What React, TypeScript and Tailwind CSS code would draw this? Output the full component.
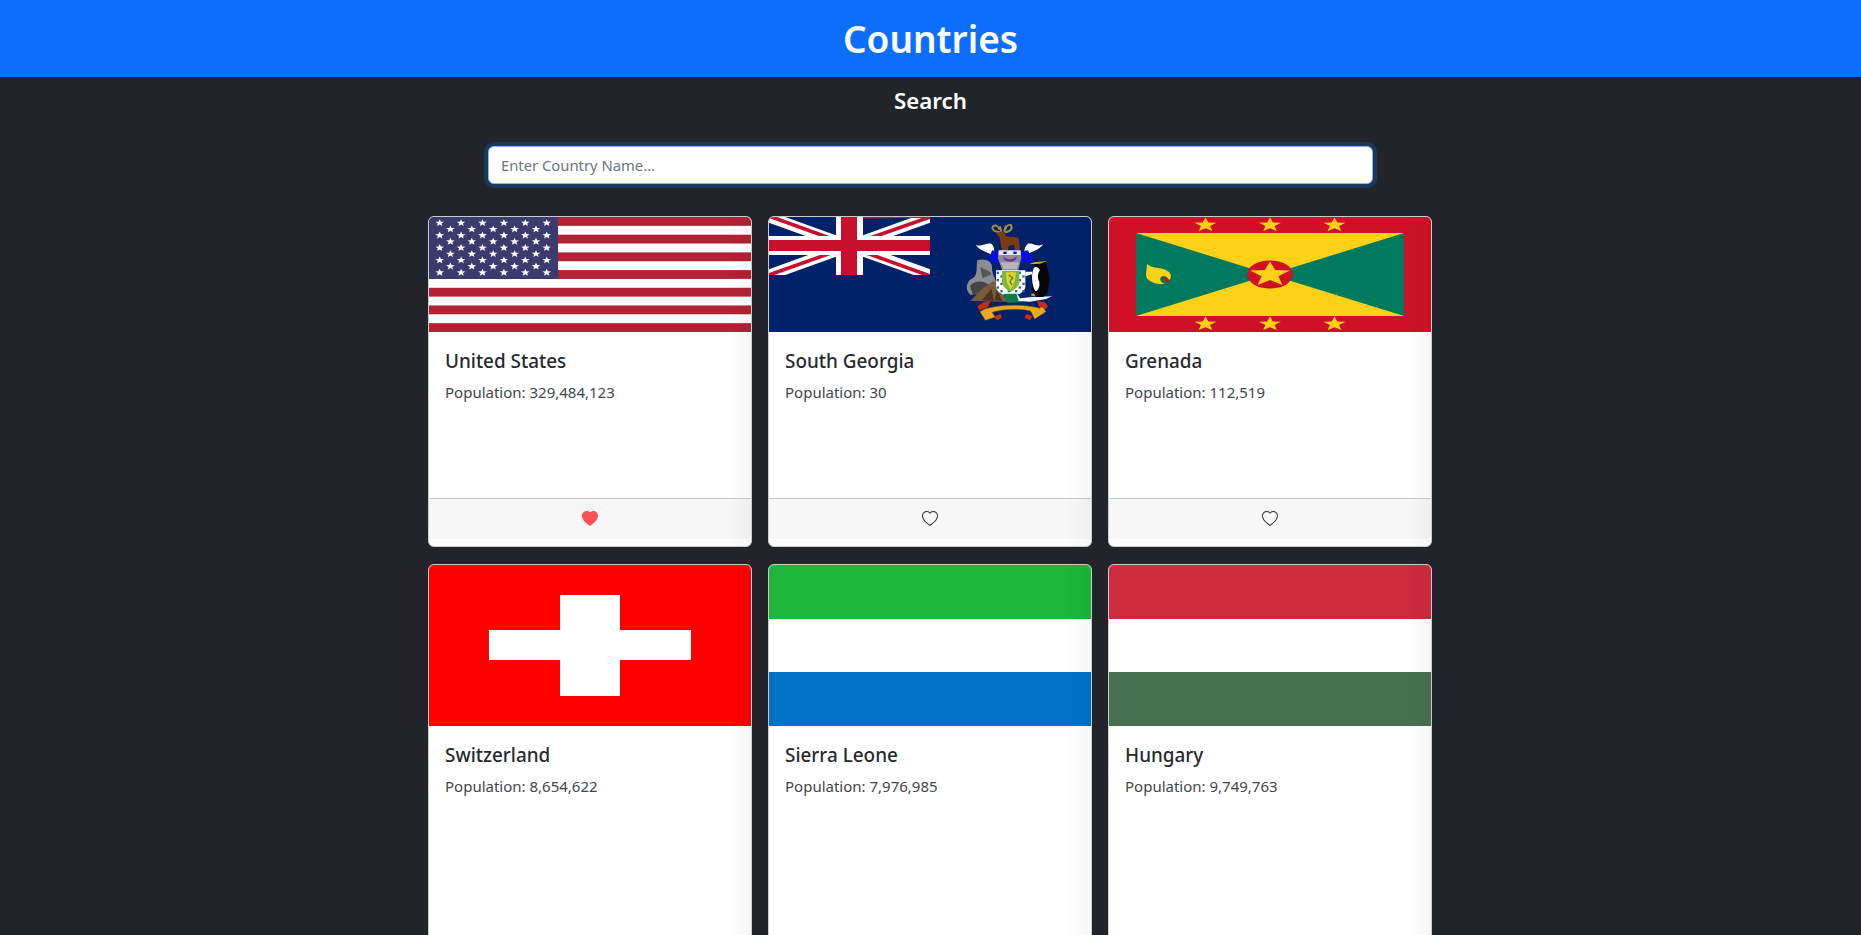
import { BsHeart, BsHeartFill } from 'react-icons/bs';
import type { ReactNode } from 'react';

// points for a 5 pointed star, rx/ry differ because the flags are stretched
function starPoints(cx: number, cy: number, rx: number, ry: number) {
  const pts: string[] = [];
  for (let i = 0; i < 10; i++) {
    const r = i % 2 === 0 ? 1 : 0.42;
    const a = -Math.PI / 2 + (i * Math.PI) / 5;
    pts.push(`${(cx + Math.cos(a) * rx * r).toFixed(2)},${(cy + Math.sin(a) * ry * r).toFixed(2)}`);
  }
  return pts.join(' ');
}

function FlagSvg({ w, h, children }: { w: number; h: number; children: ReactNode }) {
  return (
    <svg viewBox={`0 0 ${w} ${h}`} preserveAspectRatio="none" className="block w-full h-full">
      {children}
    </svg>
  );
}

function UsFlag() {
  const stripe = 115 / 13;
  const stars: [number, number][] = [];
  for (let row = 0; row < 9; row++) {
    const odd = row % 2 === 1;
    const count = odd ? 5 : 6;
    for (let c = 0; c < count; c++) {
      stars.push([10.7 + (odd ? 10.7 : 0) + c * 21.4, 6 + row * 6.2]);
    }
  }
  return (
    <FlagSvg w={322} h={115}>
      <rect width="322" height="115" fill="#fff" />
      {[0, 2, 4, 6, 8, 10, 12].map((i) => (
        <rect key={i} y={i * stripe} width="322" height={stripe} fill="#b22234" />
      ))}
      <rect width="129" height="62" fill="#3c3b6e" />
      {stars.map(([x, y], i) => (
        <polygon key={i} points={starPoints(x, y, 4.6, 3.8)} fill="#fff" />
      ))}
    </FlagSvg>
  );
}

function CoatOfArms() {
  const checks: [number, number][] = [];
  for (let y = 170; y < 232; y += 11) {
    for (let x = 110; x < 196; x += 11) {
      if ((x < 128 || x > 172 || y > 222) && (x + y) % 2 === 0) checks.push([x, y]);
    }
  }
  return (
    <g transform="translate(191 -2) scale(0.3333)">
      {/* antlers */}
      <path d="M120 52 C98 50 92 38 102 32 C110 30 116 36 118 44 M120 34 L124 50 M134 52 C152 50 160 40 152 30 C144 28 138 36 136 44 M138 32 L132 50" fill="none" stroke="#a48b45" strokeWidth="6" />
      {/* stag */}
      <path d="M106 53 L132 50 L138 64 L176 68 L180 106 L164 106 L162 90 L146 92 L144 106 L126 106 L122 84 L118 66 Z" fill="#7d3a12" />
      {/* wings */}
      <path d="M47 90 C66 96 80 82 94 86 C106 98 104 116 98 122 C84 110 62 110 47 90 Z" fill="#fff" />
      <path d="M250 88 C232 98 216 82 204 86 C190 98 192 114 198 120 C214 110 234 108 250 88 Z" fill="#fff" />
      {/* mantling */}
      <path d="M96 106 L120 110 L138 132 L124 150 L104 140 L84 142 Z" fill="#0a10dc" />
      <path d="M204 106 L180 110 L162 132 L176 150 L196 140 L222 144 Z" fill="#0a10dc" />
      {/* helm */}
      <path d="M116 108 L182 108 L184 128 L174 170 L128 170 L114 130 Z" fill="#8b8d90" />
      <path d="M116 106 L182 106 L182 120 L116 120 Z" fill="#e8e8ee" />
      <path d="M130 124 C142 136 158 136 170 124 L168 134 C156 142 144 142 132 134 Z" fill="#7c2fa0" />
      <rect x="130" y="110" width="10" height="7" fill="#0a10dc" />
      <rect x="160" y="110" width="10" height="7" fill="#0a10dc" />
      <path d="M122 142 L178 142 L170 162 L130 162 Z" fill="#b4b6b9" />
      {/* seal */}
      <path d="M52 136 C76 128 98 140 96 158 C94 176 112 196 112 226 L32 240 C14 226 18 198 38 190 C54 182 48 156 52 136 Z" fill="#8b8d90" />
      <path d="M30 212 C50 192 82 196 102 228 L38 238 Z" fill="#434445" />
      <path d="M60 156 C72 164 90 164 94 178 L68 190 Z" fill="#55575a" />
      {/* tussock */}
      <path d="M30 258 L70 218 L100 198 L120 212 L146 260 Z" fill="#7a5a3c" />
      <path d="M66 256 L94 220 L102 258 Z M104 256 L110 224 L128 258 Z" fill="#4e3420" />
      {/* shield */}
      <path d="M108 166 L196 166 L196 216 C192 236 170 240 152 246 C132 240 110 234 108 216 Z" fill="#fff" />
      {checks.map(([x, y], i) => (
        <rect key={i} x={x} y={y} width="7" height="7" fill="#2a62ad" />
      ))}
      <path d="M126 168 L178 168 L178 204 C174 218 160 226 152 232 C144 226 130 218 126 204 Z" fill="#7cb83f" />
      <path d="M138 172 L168 172 L164 200 L152 224 L140 200 Z" fill="#e9d02c" />
      <path d="M146 180 L158 188 L150 200 L156 210" fill="none" stroke="#3c8a38" strokeWidth="4" />
      {/* mound */}
      <path d="M130 236 L176 236 L186 262 L142 264 Z" fill="#0f7a4c" />
      {/* white bird */}
      <path d="M168 232 L180 250 L216 246 L276 244 L258 252 L210 260 L176 258 Z" fill="#f3f3f3" />
      <rect x="214" y="236" width="26" height="7" fill="#e08a3a" />
      {/* penguin */}
      <path d="M206 148 L232 138 L258 140 L270 190 L262 232 L250 246 L228 246 L218 228 L214 190 L226 150 Z" fill="#060606" />
      <path d="M222 158 C212 176 216 214 226 228 C234 228 240 216 238 200 C232 190 232 176 240 166 C234 156 228 154 222 158 Z" fill="#fff" />
      <path d="M206 148 L224 141 L262 138 L240 146 Z" fill="#d6a21c" />
      <path d="M196 170 L216 170 L216 178 L196 184 Z" fill="#fff" />
      {/* scroll */}
      <path d="M74 282 C120 268 190 266 240 280 L246 270 L258 290 L224 312 L212 288 C180 280 128 282 96 292 L106 306 L76 316 L60 290 Z" fill="#e8a91e" stroke="#8a5d10" strokeWidth="1.5" />
      <path d="M70 262 L92 258 L84 276 L58 286 L52 274 Z" fill="#c92c0f" />
      <path d="M232 258 L254 262 L264 272 L258 282 L236 274 Z" fill="#c92c0f" />
      <path d="M100 306 L122 296 L126 308 L112 316 Z" fill="#c92c0f" />
      <path d="M198 296 L218 304 L210 316 L194 308 Z" fill="#c92c0f" />
    </g>
  );
}

function SouthGeorgiaFlag() {
  return (
    <FlagSvg w={322} h={115}>
      <rect width="322" height="115" fill="#012169" />
      <svg x="0" y="0" width="161" height="58" viewBox="0 0 161 58" preserveAspectRatio="none">
        <path d="M0 0 L161 58 M161 0 L0 58" stroke="#fff" strokeWidth="11" />
        <path d="M0 -1 L80 28 M81 0 L161 -1 M161 0 L84 27 M81 30 L161 59 M0 58 L76 31" stroke="#c8102e" strokeWidth="3.6" fill="none" />
        <rect x="67" width="27" height="58" fill="#fff" />
        <rect y="19" width="161" height="19" fill="#fff" />
        <rect x="72" width="16" height="58" fill="#c8102e" />
        <rect y="23" width="161" height="11" fill="#c8102e" />
      </svg>
      <CoatOfArms />
    </FlagSvg>
  );
}

function GrenadaFlag() {
  const stars = [96.5, 161, 225.5];
  return (
    <FlagSvg w={322} h={115}>
      <rect width="322" height="115" fill="#ce1126" />
      <rect x="27" y="16" width="268" height="83" fill="#fcd116" />
      <polygon points="27,16 161,57.5 27,99" fill="#007a5e" />
      <polygon points="295,16 161,57.5 295,99" fill="#007a5e" />
      <ellipse cx="161" cy="57.5" rx="23" ry="14" fill="#ce1126" />
      <polygon points={starPoints(161, 57.5, 21, 13)} fill="#fcd116" />
      {stars.map((x) => (
        <polygon key={x} points={starPoints(x, 8, 11.5, 7.5)} fill="#fcd116" />
      ))}
      {stars.map((x) => (
        <polygon key={x} points={starPoints(x, 107, 11.5, 7.5)} fill="#fcd116" />
      ))}
      <path d="M38 47 C43 52 55 50 60 55 C63 58 62 62 60 63 C58 59 54 58 52 60 C50 62 52 66 56 67 C47 68 37 64 37 58 Z" fill="#fcd116" />
      <path d="M54 60 C57 60 60 62 61 65 C58 66 54 64 54 60 Z" fill="#ce1126" />
    </FlagSvg>
  );
}

function SwissFlag() {
  return (
    <FlagSvg w={322} h={161}>
      <rect width="322" height="161" fill="#ff0000" />
      <rect x="131" y="30" width="60" height="101" fill="#fff" />
      <rect x="60" y="65" width="202" height="30" fill="#fff" />
    </FlagSvg>
  );
}

function TricolorFlag({ top, mid, bottom }: { top: string; mid: string; bottom: string }) {
  return (
    <FlagSvg w={322} h={161}>
      <rect width="322" height="54" fill={top} />
      <rect y="54" width="322" height="54" fill={mid} />
      <rect y="107" width="322" height="54" fill={bottom} />
    </FlagSvg>
  );
}

const countries = [
  { name: 'United States', population: '329,484,123', liked: true, flag: <UsFlag />, imgClass: 'h-[115px]', bodyClass: 'h-[166px]' },
  { name: 'South Georgia', population: '30', liked: false, flag: <SouthGeorgiaFlag />, imgClass: 'h-[115px]', bodyClass: 'h-[166px]' },
  { name: 'Grenada', population: '112,519', liked: false, flag: <GrenadaFlag />, imgClass: 'h-[115px]', bodyClass: 'h-[166px]' },
  { name: 'Switzerland', population: '8,654,622', liked: false, flag: <SwissFlag />, imgClass: 'h-[161px]', bodyClass: 'h-[240px]' },
  { name: 'Sierra Leone', population: '7,976,985', liked: false, flag: <TricolorFlag top="#1eb53a" mid="#ffffff" bottom="#0072c6" />, imgClass: 'h-[161px]', bodyClass: 'h-[240px]' },
  { name: 'Hungary', population: '9,749,763', liked: false, flag: <TricolorFlag top="#cd2a3e" mid="#ffffff" bottom="#477050" />, imgClass: 'h-[161px]', bodyClass: 'h-[240px]' },
];

type Country = (typeof countries)[number];

function CountryCard({ country }: { country: Country }) {
  return (
    <div className="relative flex flex-col bg-white border border-[#c9cacb] rounded-[6px] overflow-hidden text-[#212529]">
      <div className={country.imgClass}>{country.flag}</div>
      <div className={`p-4 ${country.bodyClass}`}>
        <h5 className="text-[18.9px] leading-[24px] font-medium text-[#26292d] mt-px mb-[7px]">{country.name}</h5>
        <p className="text-[15px] leading-[24px] text-[#41464b]">Population: {country.population}</p>
      </div>
      <div className="flex items-center justify-center h-[41px] mb-[7px] bg-[#f7f7f7] border-t border-[#c9cacb] rounded-b-[5px]">
        {country.liked ? (
          <BsHeartFill size={16} className="text-[#ff5252]" />
        ) : (
          <BsHeart size={16} className="text-[#333]" />
        )}
      </div>
      {/* soft grey on the right edge of each card */}
      <div className="absolute inset-0 pointer-events-none bg-[linear-gradient(to_right,transparent_92%,rgba(0,0,0,0.03))]" />
    </div>
  );
}

export default function App() {
  return (
    <div className="min-h-screen bg-[#212529] font-['Noto_Sans',sans-serif]">
      <header className="h-[77px] flex items-center justify-center bg-[#0d6efd]">
        <h1 className="text-[37px] leading-[48px] font-semibold text-white">Countries</h1>
      </header>
      <h4 className="pt-[9px] text-center text-[22.3px] leading-[29px] font-semibold text-white">Search</h4>
      <div className="flex justify-center pt-[31px] pb-[32px]">
        <input
          type="text"
          placeholder="Enter Country Name..."
          className="w-[885px] h-[38px] px-3 bg-white border border-[#86b7fe] rounded-[6px] text-[14.8px] shadow-[0_0_0_4px_rgba(13,110,253,0.25)] outline-none placeholder:text-[#6c757d]"
        />
      </div>
      <div className="w-[1004px] ml-[428px] grid grid-cols-3 gap-x-4 gap-y-[17px] pb-6">
        {countries.map((c) => (
          <CountryCard key={c.name} country={c} />
        ))}
      </div>
    </div>
  );
}
